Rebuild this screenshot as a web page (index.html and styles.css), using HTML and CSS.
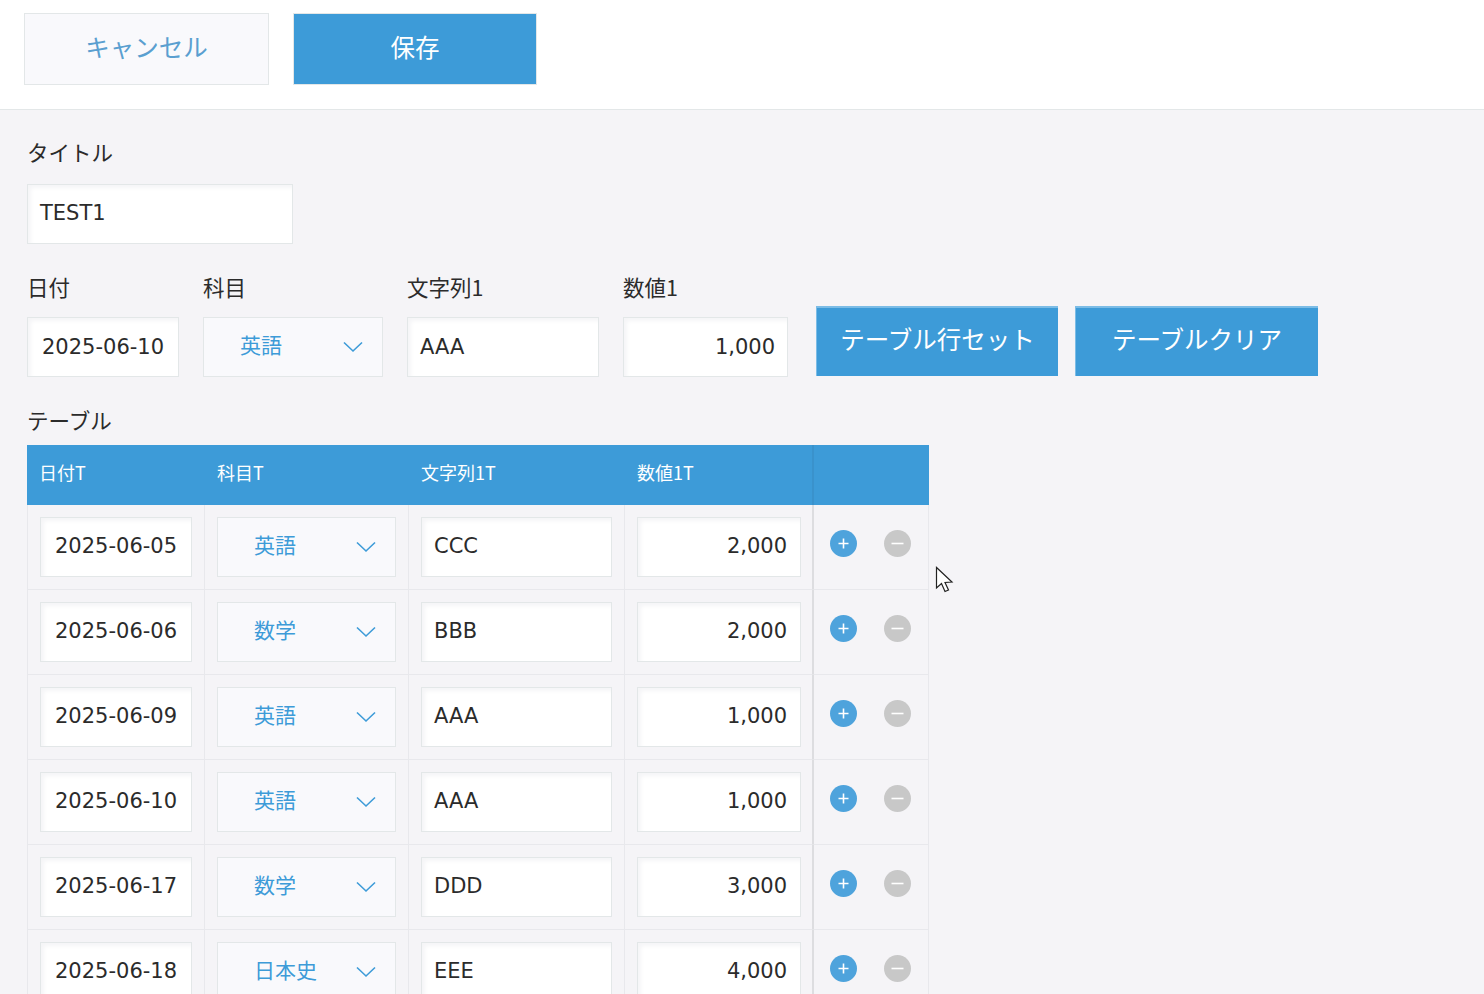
FILE: index.html
```html
<!DOCTYPE html>
<html lang="ja">
<head>
    <meta charset="UTF-8">
    <title>レコード編集</title>
    <link rel="stylesheet" href="styles.css">
</head>
<body>
    <div class="toolbar">
        <button class="btn-cancel">キャンセル</button>
        <button class="btn-save">保存</button>
    </div>

    <div class="form">
        <div class="field field-title">
            <div class="field-label">タイトル</div>
            <div class="input w-title">TEST1</div>
        </div>

        <div class="form-row">
            <div class="field field-date">
                <div class="field-label">日付</div>
                <div class="input w-date">2025-06-10</div>
            </div>
            <div class="field field-subject">
                <div class="field-label">科目</div>
                <div class="select w-subject">
                    <span>英語</span>
                    <svg class="chevron" viewBox="0 0 20 12"><path d="M1 1.5 L10 10 L19 1.5"/></svg>
                </div>
            </div>
            <div class="field field-text">
                <div class="field-label">文字列1</div>
                <div class="input w-text">AAA</div>
            </div>
            <div class="field field-num">
                <div class="field-label">数値1</div>
                <div class="input w-num num">1,000</div>
            </div>
            <button class="btn-blue btn-rowset">テーブル行セット</button>
            <button class="btn-blue btn-clear">テーブルクリア</button>
        </div>

        <div class="table-label">テーブル</div>
        <table class="subtable">
            <thead>
                <tr>
                    <th class="col-date">日付T</th>
                    <th class="col-subject">科目T</th>
                    <th class="col-text">文字列1T</th>
                    <th class="col-num">数値1T</th>
                    <th class="col-action"></th>
                </tr>
            </thead>
            <tbody id="rows">
                <tr>
                    <td class="col-date"><div class="input w-date">2025-06-05</div></td>
                    <td><div class="select w-subject"><span>英語</span><svg class="chevron" viewBox="0 0 20 12"><path d="M1 1.5 L10 10 L19 1.5"/></svg></div></td>
                    <td><div class="input w-text">CCC</div></td>
                    <td class="col-num"><div class="input w-num num">2,000</div></td>
                    <td class="col-action"><div class="actions"><span class="round plus"><svg viewBox="0 0 27 27"><path d="M13.5 8.5 V18.5 M8.5 13.5 H18.5"/></svg></span><span class="round minus"><svg viewBox="0 0 27 27"><path d="M7.5 13.5 H19.5"/></svg></span></div></td>
                </tr>
                <tr>
                    <td class="col-date"><div class="input w-date">2025-06-06</div></td>
                    <td><div class="select w-subject"><span>数学</span><svg class="chevron" viewBox="0 0 20 12"><path d="M1 1.5 L10 10 L19 1.5"/></svg></div></td>
                    <td><div class="input w-text">BBB</div></td>
                    <td class="col-num"><div class="input w-num num">2,000</div></td>
                    <td class="col-action"><div class="actions"><span class="round plus"><svg viewBox="0 0 27 27"><path d="M13.5 8.5 V18.5 M8.5 13.5 H18.5"/></svg></span><span class="round minus"><svg viewBox="0 0 27 27"><path d="M7.5 13.5 H19.5"/></svg></span></div></td>
                </tr>
                <tr>
                    <td class="col-date"><div class="input w-date">2025-06-09</div></td>
                    <td><div class="select w-subject"><span>英語</span><svg class="chevron" viewBox="0 0 20 12"><path d="M1 1.5 L10 10 L19 1.5"/></svg></div></td>
                    <td><div class="input w-text">AAA</div></td>
                    <td class="col-num"><div class="input w-num num">1,000</div></td>
                    <td class="col-action"><div class="actions"><span class="round plus"><svg viewBox="0 0 27 27"><path d="M13.5 8.5 V18.5 M8.5 13.5 H18.5"/></svg></span><span class="round minus"><svg viewBox="0 0 27 27"><path d="M7.5 13.5 H19.5"/></svg></span></div></td>
                </tr>
                <tr>
                    <td class="col-date"><div class="input w-date">2025-06-10</div></td>
                    <td><div class="select w-subject"><span>英語</span><svg class="chevron" viewBox="0 0 20 12"><path d="M1 1.5 L10 10 L19 1.5"/></svg></div></td>
                    <td><div class="input w-text">AAA</div></td>
                    <td class="col-num"><div class="input w-num num">1,000</div></td>
                    <td class="col-action"><div class="actions"><span class="round plus"><svg viewBox="0 0 27 27"><path d="M13.5 8.5 V18.5 M8.5 13.5 H18.5"/></svg></span><span class="round minus"><svg viewBox="0 0 27 27"><path d="M7.5 13.5 H19.5"/></svg></span></div></td>
                </tr>
                <tr>
                    <td class="col-date"><div class="input w-date">2025-06-17</div></td>
                    <td><div class="select w-subject"><span>数学</span><svg class="chevron" viewBox="0 0 20 12"><path d="M1 1.5 L10 10 L19 1.5"/></svg></div></td>
                    <td><div class="input w-text">DDD</div></td>
                    <td class="col-num"><div class="input w-num num">3,000</div></td>
                    <td class="col-action"><div class="actions"><span class="round plus"><svg viewBox="0 0 27 27"><path d="M13.5 8.5 V18.5 M8.5 13.5 H18.5"/></svg></span><span class="round minus"><svg viewBox="0 0 27 27"><path d="M7.5 13.5 H19.5"/></svg></span></div></td>
                </tr>
                <tr>
                    <td class="col-date"><div class="input w-date">2025-06-18</div></td>
                    <td><div class="select w-subject"><span>日本史</span><svg class="chevron" viewBox="0 0 20 12"><path d="M1 1.5 L10 10 L19 1.5"/></svg></div></td>
                    <td><div class="input w-text">EEE</div></td>
                    <td class="col-num"><div class="input w-num num">4,000</div></td>
                    <td class="col-action"><div class="actions"><span class="round plus"><svg viewBox="0 0 27 27"><path d="M13.5 8.5 V18.5 M8.5 13.5 H18.5"/></svg></span><span class="round minus"><svg viewBox="0 0 27 27"><path d="M7.5 13.5 H19.5"/></svg></span></div></td>
                </tr>
            </tbody>
        </table>
    </div>

    <!-- mouse pointer from the capture -->
    <svg class="cursor" viewBox="0 0 20 30"><path d="M1.5 1.5 V22 L6.5 17.5 L10 25.5 L13.5 24 L10 16.5 L17 16 Z"/></svg>
</body>
</html>
```

FILE: styles.css
```css
html, body {
    height: 994px;
    overflow: hidden;
}
body {
    margin: 0;
    font-family: "DejaVu Sans", "Noto Sans CJK JP", sans-serif;
    background-color: #f5f4f7;
    color: #2b2b2b;
}
button {
    font-family: "Noto Sans CJK JP", sans-serif;
    font-weight: 400;
    padding: 0;
    cursor: pointer;
}
.toolbar {
    height: 110px;
    box-sizing: border-box;
    padding: 13px 0 0 24px;
    display: flex;
    align-items: flex-start;
    gap: 24px;
    background: #fff;
    border-bottom: 1px solid #e3e7e8;
}
.btn-cancel,
.btn-save {
    height: 72px;
    padding-bottom: 6px;
    font-size: 24.5px;
    border: 1px solid #e3e7e8;
}
.btn-cancel {
    width: 245px;
    background: #f9f9fc;
    color: #5a9fd0;
}
.btn-save {
    width: 244px;
    background: #3d9bd8;
    color: #fff;
}
.form {
    padding: 26px 0 0 27px;
}
.field-label,
.table-label {
    font-family: "Noto Sans CJK JP", sans-serif;
    font-size: 21.5px;
    line-height: 32px;
    color: #2b2b2b;
}
.field-label {
    margin-bottom: 14px;
}
.field-title .field-label {
    margin-bottom: 16px;
}
.field-title {
    margin-bottom: 27px;
}
.form-row {
    display: flex;
    align-items: flex-end;
}
.field-date { margin-right: 24px; }
.field-subject { margin-right: 24px; }
.field-text { margin-right: 24px; }
.field-num { margin-right: 28px; }
.input,
.select {
    box-sizing: border-box;
    height: 60px;
    border: 1px solid #e3e7e8;
    font-size: 21px;
    display: flex;
    align-items: center;
}
.input {
    background: #fff;
    padding: 0 12px 2px 12px;
    box-shadow: inset 3px 3px 4px #f5f5f7;
}
.form-row .input {
    padding-bottom: 0;
}
.select {
    background: #f9f9fc;
    color: #3d9bd8;
    padding: 0 19px 0 36px;
    justify-content: space-between;
    font-family: "Noto Sans CJK JP", sans-serif;
}
.select span {
    padding-bottom: 6px;
}
.num {
    justify-content: flex-end;
}
.w-title { width: 266px; }
.w-date { width: 152px; padding-left: 14px; }
.w-subject { width: 180px; }
.w-text { width: 192px; }
.w-num { width: 165px; }
.chevron {
    width: 20px;
    height: 12px;
    fill: none;
    stroke: #3d9bd8;
    stroke-width: 1.6;
}
.btn-blue {
    height: 70px;
    margin-bottom: 1px;
    padding-bottom: 8px;
    font-size: 24.5px;
    background: #3d9bd8;
    color: #fff;
    border: none;
    border-top: 2px solid #7cbce6;
    border-left: 1px solid #7cbce6;
}
.btn-rowset {
    width: 242px;
    margin-right: 17px;
}
.btn-clear {
    width: 243px;
}
.table-label {
    margin-top: 27px;
    margin-bottom: 9px;
}
.subtable {
    border-collapse: separate;
    border-spacing: 0;
    table-layout: fixed;
    width: 902px;
}
.subtable th {
    height: 60px;
    padding: 0 0 6px 12px;
    box-sizing: border-box;
    background: #3d9bd8;
    color: #fff;
    text-align: left;
    font-family: "Noto Sans CJK JP", sans-serif;
    font-size: 18px;
    font-weight: 400;
}
th.col-date { width: 178px; }
th.col-subject { width: 204px; }
th.col-text { width: 216px; }
th.col-num { width: 188px; border-right: 1px solid #3a92cc; }
th.col-action { width: 116px; border-left: 1px solid #3a92cc; }
.subtable td {
    height: 85px;
    box-sizing: border-box;
    padding: 0 0 0 12px;
    border-right: 1px solid #e8e8ec;
    border-bottom: 1px solid #e8e8ec;
    vertical-align: middle;
}
.subtable td.col-date {
    border-left: 1px solid #e8e8ec;
}
.subtable td.col-num {
    border-right-color: #dddde0;
}
.subtable td .w-subject { width: 179px; }
.subtable td .w-text { width: 191px; }
.subtable td .w-num { width: 164px; padding-right: 13px; }
.subtable td.col-action {
    padding: 0;
    border-left: 1px solid #dddde0;
}
.actions {
    display: flex;
    gap: 27px;
    padding: 0 0 8px 16px;
}
.round {
    width: 27px;
    height: 27px;
    border-radius: 50%;
    display: block;
}
.round svg {
    display: block;
    width: 27px;
    height: 27px;
    fill: none;
    stroke: #fff;
    stroke-width: 1.6;
}
.plus { background: #4ea3dc; }
.minus { background: #c8c8c8; }
.cursor {
    position: absolute;
    left: 935px;
    top: 566px;
    width: 20px;
    height: 30px;
    fill: #fff;
    stroke: #222;
    stroke-width: 1.2;
}
```
